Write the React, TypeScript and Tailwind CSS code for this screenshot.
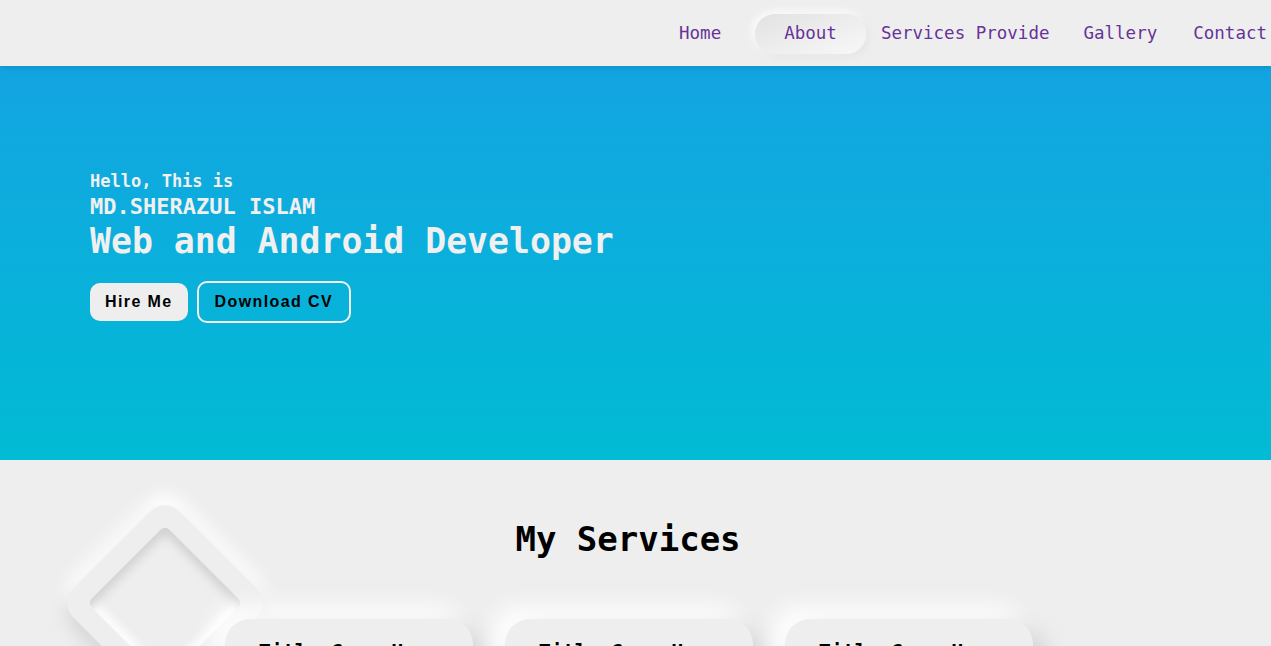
const mono = "font-['DejaVu_Sans_Mono','Liberation_Mono',monospace]";

function NavBar() {
  return (
    <nav className={`relative z-10 flex h-[66px] items-center justify-end bg-[#eeeeee] pr-[4px] pt-[2px] text-[17.5px] leading-none text-[#663399] shadow-[0_2px_6px_rgba(0,0,0,0.12)] ${mono}`}>
      <a>Home</a>
      <a className="ml-[34px] flex h-10 items-center rounded-full bg-gradient-to-br from-[#e2e2e2] to-[#f8f8f8] px-[29px] shadow-[3px_3px_8px_rgba(0,0,0,0.04),-3px_-3px_8px_rgba(255,255,255,0.8)]">
        About
      </a>
      <a className="ml-[15px]">Services Provide</a>
      <a className="ml-[34px]">Gallery</a>
      <a className="ml-[36px]">Contact</a>
    </nav>
  );
}

function Hero() {
  return (
    <section className="h-[394px] bg-gradient-to-b from-[#13a4e2] to-[#02bbd4] pl-[90px] pt-[107px] text-[#f0f0f0]">
      <p className={`text-[17px] font-bold leading-none ${mono}`}>Hello, This is</p>
      <p className={`mt-[6px] text-[22px] font-bold leading-none ${mono}`}>MD.SHERAZUL ISLAM</p>
      <h1 className={`mt-[6px] text-[34.8px] font-bold leading-none ${mono}`}>Web and Android Developer</h1>
      <div className="mt-[22px] flex items-center gap-[9px] font-['Liberation_Sans',Arial,sans-serif] text-[16px] font-bold tracking-[1.4px] text-black">
        <button className="flex h-[38px] items-center rounded-[10px] bg-[#eeeeee] px-[15px]">Hire Me</button>
        <button className="flex h-[42px] items-center rounded-[10px] border-2 border-[#f2f2f2] px-[16px]">Download CV</button>
      </div>
    </section>
  );
}

function ServiceCard({ title }: { title: string }) {
  return (
    <div className="relative h-[300px] w-[248px] rounded-[25px] bg-[#eeeeee] pt-[22px] text-center shadow-[12px_12px_24px_#cfcfcf,-12px_-12px_24px_#ffffff]">
      <h3 className={`text-[20px] font-bold leading-none text-black ${mono}`}>{title}</h3>
    </div>
  );
}

function Services() {
  return (
    <section className="relative overflow-hidden bg-[#eeeeee] pb-10">
      {/* decorative diamond */}
      <div className="absolute left-[90px] top-[68px] h-[150px] w-[150px] rotate-45 rounded-[20px] bg-[#eeeeee] shadow-[8px_8px_18px_#d6d6d6,-8px_-8px_18px_#ffffff]">
        <div className="absolute inset-[20px] rounded-[6px] shadow-[inset_6px_6px_10px_#d3d3d3,inset_-6px_-6px_10px_#ffffff]" />
      </div>

      <h2 className={`relative pr-[15px] pt-[62px] text-center text-[34px] font-bold leading-none text-black ${mono}`}>
        My Services
      </h2>
      <div className="relative mt-[63px] flex justify-center gap-[32px] pr-[13px]">
        <ServiceCard title="Title Goes Here" />
        <ServiceCard title="Title Goes Here" />
        <ServiceCard title="Title Goes Here" />
      </div>
    </section>
  );
}

export default function App() {
  return (
    <div className="min-h-screen bg-[#eeeeee]">
      <NavBar />
      <Hero />
      <Services />
    </div>
  );
}
